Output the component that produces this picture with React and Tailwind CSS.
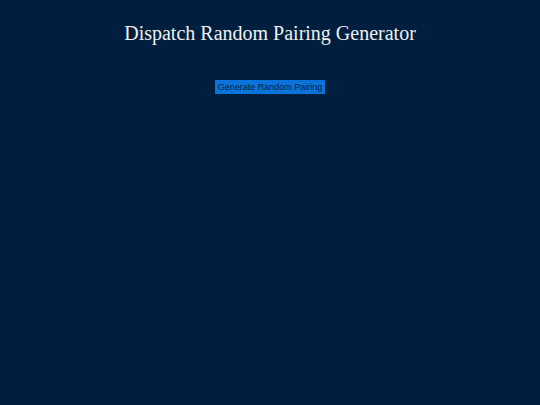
export default function App() {
  return (
    <div className="min-h-[405px] w-full bg-[#001f3f] flex flex-col items-center">
      <h1 className="mt-[21px] text-[20px] leading-[24px] text-[#f0f0f0] font-['Liberation_Serif',serif]">
        Dispatch Random Pairing Generator
      </h1>
      <button className="mt-[35px] bg-[#0a74da] text-[#001f3f] text-[9px] leading-[12px] px-[3px] py-[1px] font-['Liberation_Sans',sans-serif]">
        Generate Random Pairing
      </button>
    </div>
  );
}
